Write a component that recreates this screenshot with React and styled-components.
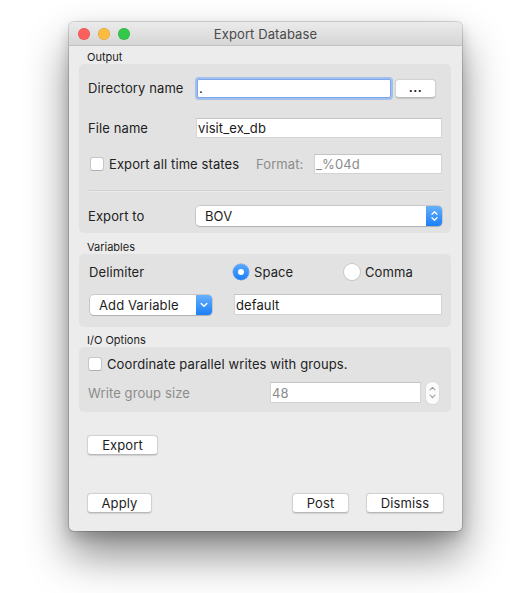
import React from 'react';
import styled, { createGlobalStyle } from 'styled-components';

const GlobalStyle = createGlobalStyle`
  html, body { margin: 0; padding: 0; background: #ffffff; }
  body {
    font-family: Inter, "Liberation Sans", Arial, sans-serif;
    color: #222222;
    -webkit-font-smoothing: antialiased;
  }
  #root { width: 513px; height: 593px; overflow: hidden; }
  * { box-sizing: border-box; }
`;

const Stage = styled.div`
  width: 513px;
  height: 593px;
  padding: 22px 0 0 69px;
`;

const Window = styled.div`
  width: 393px;
  height: 509px;
  display: flex;
  flex-direction: column;
  background: #ececec;
  border-radius: 5px;
  overflow: hidden;
  box-shadow: 0 0 0 1px rgba(0, 0, 0, 0.14), 0 24px 44px rgba(0, 0, 0, 0.46),
    0 6px 14px rgba(0, 0, 0, 0.18);
`;

const TitleBar = styled.div`
  flex: none;
  height: 24px;
  display: grid;
  grid-template-columns: 1fr auto 1fr;
  align-items: center;
  background: linear-gradient(#ebebeb, #d6d6d6);
  border-bottom: 1px solid #c2c2c2;
`;

const Lights = styled.div`
  display: flex;
  gap: 8px;
  padding-left: 9px;
`;

const Light = styled.span`
  width: 12px;
  height: 12px;
  border-radius: 50%;
  background: ${(p) => p.$color};
  box-shadow: inset 0 0 0 0.5px rgba(0, 0, 0, 0.15);
`;

const Title = styled.div`
  font-size: 13px;
  letter-spacing: 0.1px;
  color: #4a4a4a;
  line-height: 16px;
`;

const Content = styled.div`
  flex: 1;
  display: flex;
  flex-direction: column;
  padding: 4px 11px 18px 10px;
`;

const SectionLabel = styled.div`
  height: 14px;
  line-height: 14px;
  font-size: 11px;
  padding-left: 8px;
  margin-top: ${(p) => p.$mt || 0}px;
  color: #222;
`;

const Group = styled.div`
  background: #e2e2e2;
  border-radius: 5px;
  padding: ${(p) => p.$pad};
  display: flex;
  flex-direction: column;
`;

const Row = styled.div`
  display: flex;
  align-items: center;
  height: ${(p) => p.$h}px;
  margin-top: ${(p) => p.$mt || 0}px;
`;

const Label = styled.div`
  flex: none;
  width: ${(p) => p.$w || 108}px;
  margin-left: ${(p) => p.$ml || 0}px;
  font-size: 13px;
  letter-spacing: 0.1px;
  color: ${(p) => (p.$dim ? '#8c8c8c' : '#222')};
  white-space: nowrap;
`;

const Field = styled.div`
  height: ${(p) => p.$h || 20}px;
  flex: ${(p) => (p.$w ? 'none' : '1')};
  width: ${(p) => (p.$w ? `${p.$w}px` : 'auto')};
  margin-left: ${(p) => p.$ml || 0}px;
  background: #ffffff;
  border: 1px solid ${(p) => (p.$focus ? '#79a9ec' : '#d3d3d3')};
  border-top-color: ${(p) => (p.$focus ? '#79a9ec' : '#c4c4c4')};
  border-radius: ${(p) => (p.$focus ? '2px' : '0')};
  box-shadow: ${(p) => (p.$focus ? '0 0 0 2px rgba(120, 170, 238, 0.6)' : 'none')};
  padding: 0 1px;
  display: flex;
  align-items: center;
  font-size: 13px;
  letter-spacing: 0.1px;
  color: ${(p) => (p.$dim ? '#8c8c8c' : '#1a1a1a')};
  white-space: nowrap;
`;

const PushButton = styled.button`
  flex: none;
  width: ${(p) => p.$w}px;
  height: ${(p) => p.$h || 20}px;
  margin-left: ${(p) => p.$ml || 0}px;
  margin-right: ${(p) => p.$mr || 0}px;
  padding: 0;
  background: #ffffff;
  border: 1px solid #d2d2d2;
  border-bottom-color: #b9b9b9;
  border-radius: 4px;
  box-shadow: 0 0.5px 1px rgba(0, 0, 0, 0.12);
  font-family: inherit;
  font-size: 13px;
  letter-spacing: 0.1px;
  color: #1e1e1e;
  line-height: 17px;
`;

const Dots = styled.span`
  font-weight: 700;
  font-size: 12px;
  letter-spacing: 0.5px;
  position: relative;
  top: -1px;
`;

const CheckBox = styled.span`
  flex: none;
  width: 14px;
  height: 14px;
  margin-left: ${(p) => p.$ml || 0}px;
  background: #ffffff;
  border: 1px solid #c6c6c6;
  border-bottom-color: #b0b0b0;
  border-radius: 3px;
`;

const CheckText = styled.span`
  flex: none;
  width: ${(p) => (p.$w ? `${p.$w}px` : 'auto')};
  margin-left: 5px;
  font-size: 13px;
  letter-spacing: 0.1px;
  color: #222;
  white-space: nowrap;
`;

const Separator = styled.div`
  height: 1px;
  margin: 16px 0 0 1px;
  background: #cfcfcf;
  box-shadow: 0 1px 0 rgba(255, 255, 255, 0.35);
`;

const Combo = styled.div`
  flex: ${(p) => (p.$w ? 'none' : '1')};
  width: ${(p) => (p.$w ? `${p.$w}px` : 'auto')};
  height: ${(p) => p.$h || 20}px;
  margin-left: ${(p) => p.$ml || 0}px;
  display: flex;
  background: #ffffff;
  border-radius: 4px;
  box-shadow: 0 0 0 0.5px rgba(0, 0, 0, 0.22), 0 1px 1px rgba(0, 0, 0, 0.12);
  overflow: hidden;
`;

const ComboText = styled.div`
  flex: 1;
  display: flex;
  align-items: center;
  padding-left: 9px;
  font-size: 13px;
  letter-spacing: 0.1px;
  color: #1e1e1e;
`;

const ComboArrow = styled.div`
  flex: none;
  width: 16px;
  display: flex;
  align-items: center;
  justify-content: center;
  background: linear-gradient(#67b0fc, #1a7ff7);
`;

const RadioOption = styled.div`
  flex: none;
  width: ${(p) => (p.$w ? `${p.$w}px` : 'auto')};
  display: flex;
  align-items: center;
`;

const RadioDot = styled.span`
  flex: none;
  width: 16px;
  height: 16px;
  border-radius: 50%;
  display: flex;
  align-items: center;
  justify-content: center;
  background: ${(p) => (p.$on ? 'linear-gradient(#58a8fd, #1d7ff6)' : '#ffffff')};
  box-shadow: ${(p) =>
    p.$on ? '0 0 0 0.5px rgba(0, 90, 220, 0.5)' : '0 0 0 1px #c9c9c9, 0 1px 1px rgba(0,0,0,0.08)'};
  &::after {
    content: '';
    width: 6px;
    height: 6px;
    border-radius: 50%;
    background: #ffffff;
    display: ${(p) => (p.$on ? 'block' : 'none')};
  }
`;

const RadioText = styled.span`
  margin-left: 5px;
  font-size: 13px;
  letter-spacing: 0.1px;
  color: #222;
`;

const Stepper = styled.div`
  flex: none;
  width: 13px;
  height: 22px;
  margin-left: 5px;
  border-radius: 6px;
  background: #fbfbfb;
  box-shadow: 0 0 0 1px #dadada;
  display: flex;
  flex-direction: column;
  align-items: center;
  justify-content: center;
  gap: 3px;
`;

const ButtonBar = styled.div`
  margin-top: auto;
  display: flex;
  align-items: center;
`;

const Spacer = styled.div`
  flex: 1;
`;

const ChevronUpDown = ({ color = '#fff', w = 7 }) => (
  <svg width={w} height="12" viewBox="0 0 7 12" fill="none">
    <path d="M1 4.2 L3.5 1.8 L6 4.2" stroke={color} strokeWidth="1.3" strokeLinecap="round" strokeLinejoin="round" />
    <path d="M1 7.8 L3.5 10.2 L6 7.8" stroke={color} strokeWidth="1.3" strokeLinecap="round" strokeLinejoin="round" />
  </svg>
);

const ChevronDown = () => (
  <svg width="8" height="6" viewBox="0 0 8 6" fill="none">
    <path d="M1.2 1.5 L4 4.3 L6.8 1.5" stroke="#fff" strokeWidth="1.4" strokeLinecap="round" strokeLinejoin="round" />
  </svg>
);

const SmallChevron = ({ up }) => (
  <svg width="7" height="5" viewBox="0 0 7 5" fill="none">
    <path
      d={up ? 'M1 4 L3.5 1.3 L6 4' : 'M1 1 L3.5 3.7 L6 1'}
      stroke="#9a9a9a"
      strokeWidth="1.1"
      strokeLinecap="round"
      strokeLinejoin="round"
    />
  </svg>
);

export default function App() {
  return (
    <>
      <GlobalStyle />
      <Stage>
        <Window>
          <TitleBar>
            <Lights>
              <Light $color="#fc605c" />
              <Light $color="#fdbc40" />
              <Light $color="#34c84a" />
            </Lights>
            <Title>Export Database</Title>
            <div />
          </TitleBar>
          <Content>
            <SectionLabel>Output</SectionLabel>
            <Group $pad="13px 9px 7px 9px">
              <Row $h={22}>
                <Label $w={109}>Directory name</Label>
                <Field $focus $h={19}>.</Field>
                <PushButton $w={41} $h={19} $ml={4} $mr={6}>
                  <Dots>...</Dots>
                </PushButton>
              </Row>
              <Row $h={20} $mt={19}>
                <Label>File name</Label>
                <Field>visit_ex_db</Field>
              </Row>
              <Row $h={20} $mt={16}>
                <CheckBox $ml={2} />
                <CheckText $w={147}>Export all time states</CheckText>
                <Label $w={58} $dim>
                  Format:
                </Label>
                <Field $dim>_%04d</Field>
              </Row>
              <Separator />
              <Row $h={20} $mt={15}>
                <Label>Export to</Label>
                <Combo>
                  <ComboText>BOV</ComboText>
                  <ComboArrow>
                    <ChevronUpDown />
                  </ComboArrow>
                </Combo>
              </Row>
            </Group>

            <SectionLabel $mt={7}>Variables</SectionLabel>
            <Group $pad="9px 9px 12px 9px">
              <Row $h={18}>
                <Label $w={144} $ml={1}>
                  Delimiter
                </Label>
                <RadioOption $w={111}>
                  <RadioDot $on />
                  <RadioText>Space</RadioText>
                </RadioOption>
                <RadioOption>
                  <RadioDot />
                  <RadioText>Comma</RadioText>
                </RadioOption>
              </Row>
              <Row $h={21} $mt={13}>
                <Combo $w={122} $ml={2}>
                  <ComboText>Add Variable</ComboText>
                  <ComboArrow>
                    <ChevronDown />
                  </ComboArrow>
                </Combo>
                <Field $ml={22} $h={21}>
                  default
                </Field>
              </Row>
            </Group>

            <SectionLabel $mt={6}>I/O Options</SectionLabel>
            <Group $pad="8px 9px 8px 9px">
              <Row $h={17}>
                <CheckBox />
                <CheckText>Coordinate parallel writes with groups.</CheckText>
              </Row>
              <Row $h={23} $mt={9}>
                <Label $w={182} $dim>
                  Write group size
                </Label>
                <Field $w={151} $h={21} $dim>
                  48
                </Field>
                <Stepper>
                  <SmallChevron up />
                  <SmallChevron />
                </Stepper>
              </Row>
            </Group>

            <Row $h={20} $mt={23}>
              <PushButton $w={71} $ml={8}>
                Export
              </PushButton>
            </Row>

            <ButtonBar>
              <PushButton $w={65} $ml={8}>
                Apply
              </PushButton>
              <Spacer />
              <PushButton $w={57}>Post</PushButton>
              <PushButton $w={78} $ml={17} $mr={7}>
                Dismiss
              </PushButton>
            </ButtonBar>
          </Content>
        </Window>
      </Stage>
    </>
  );
}
